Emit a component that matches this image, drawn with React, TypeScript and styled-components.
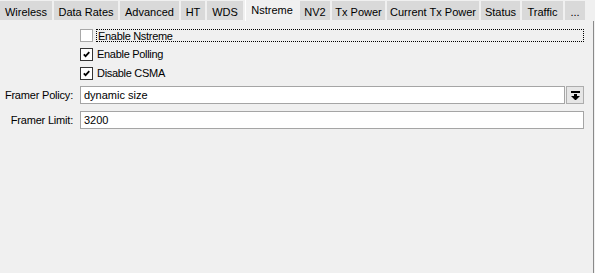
import styled, { createGlobalStyle } from 'styled-components'

const GlobalStyle = createGlobalStyle`
  html, body {
    margin: 0;
    padding: 0;
    background: #f0f0f0;
  }
  body {
    font-family: "Liberation Sans", Arial, sans-serif;
    font-size: 11px;
    color: #000;
  }
`

const tabs = [
  { name: 'Wireless', w: 52 },
  { name: 'Data Rates', w: 64 },
  { name: 'Advanced', w: 59 },
  { name: 'HT', w: 24 },
  { name: 'WDS', w: 36 },
  { name: 'Nstreme', w: 53, active: true },
  { name: 'NV2', w: 30 },
  { name: 'Tx Power', w: 53 },
  { name: 'Current Tx Power', w: 92 },
  { name: 'Status', w: 39 },
  { name: 'Traffic', w: 41 },
  { name: '...', w: 20 },
]

const checks = [
  { label: 'Enable Nstreme', checked: false, focused: true },
  { label: 'Enable Polling', checked: true },
  { label: 'Disable CSMA', checked: true },
]

function CheckMark() {
  return (
    <svg width="11" height="11" viewBox="0 0 11 11">
      <path d="M2.8 5.3 L4.6 7.2 L8.3 3.2" fill="none" stroke="#000" strokeWidth="1.7" />
    </svg>
  )
}

function DropIcon() {
  return (
    <svg width="9" height="9" viewBox="0 0 9 9">
      <rect x="0" y="0" width="9" height="2" fill="#000" />
      <rect x="3" y="3" width="3" height="2" fill="#000" />
      <path d="M0 5 H9 L4.5 9.5 Z" fill="#000" />
    </svg>
  )
}

function App() {
  return (
    <Window>
      <GlobalStyle />
      <TabStrip>
        {tabs.map(t => (
          <Tab key={t.name} $w={t.w} $active={!!t.active}>{t.name}</Tab>
        ))}
      </TabStrip>

      <Panel>
        <CheckList>
          {checks.map(c => (
            <CheckRow key={c.label}>
              <Box $checked={c.checked}>{c.checked && <CheckMark />}</Box>
              <CheckLabel $focused={!!c.focused}>{c.label}</CheckLabel>
            </CheckRow>
          ))}
        </CheckList>

        <Fields>
          <FieldLabel>Framer Policy:</FieldLabel>
          <FieldControl>
            <TextBox>dynamic size</TextBox>
            <DropButton><DropIcon /></DropButton>
          </FieldControl>

          <FieldLabel>Framer Limit:</FieldLabel>
          <FieldControl>
            <TextBox>3200</TextBox>
          </FieldControl>
        </Fields>
      </Panel>
    </Window>
  )
}

export default App

const Window = styled.div`
  width: 595px;
  height: 273px;
  display: flex;
  flex-direction: column;
  overflow: hidden;
  background: #f0f0f0;
`
const TabStrip = styled.div`
  display: flex;
  align-items: flex-start;
  gap: 2px;
  height: 21px;
`
const Tab = styled.div<{ $w: number; $active: boolean }>`
  width: ${p => p.$w}px;
  height: ${p => (p.$active ? 21 : 19)}px;
  margin-top: ${p => (p.$active ? 0 : 1)}px;
  box-sizing: border-box;
  padding: ${p => (p.$active ? '0 0 2px' : '2px 0 0')};
  display: flex;
  align-items: center;
  justify-content: center;
  white-space: nowrap;
  background: ${p => (p.$active ? '#f0f0f0' : '#d9d9d9')};
  border-left: ${p => (p.$active ? '1px solid #ffffff' : 'none')};
`
const Panel = styled.div`
  flex: 1;
  width: 594px;
  box-sizing: border-box;
  border-right: 1px solid #8a8a8a;
  padding: 8px 9px 0 0;
  display: flex;
  flex-direction: column;
  gap: 6px;
`
const CheckList = styled.div`
  display: flex;
  flex-direction: column;
  gap: 6px;
  padding-left: 80px;
`
const CheckRow = styled.div`
  display: flex;
  align-items: center;
  height: 13px;
  gap: 3px;
`
const Box = styled.div<{ $checked: boolean }>`
  width: 13px;
  height: 13px;
  box-sizing: border-box;
  background: #fff;
  border: 1px solid ${p => (p.$checked ? '#333333' : '#a8a8a8')};
  display: flex;
  align-items: center;
  justify-content: center;
  flex-shrink: 0;
`
const CheckLabel = styled.div<{ $focused: boolean }>`
  flex: 1;
  height: 13px;
  line-height: 13px;
  box-sizing: border-box;
  padding-left: 1px;
  letter-spacing: -0.3px;
  border: 1px dotted ${p => (p.$focused ? '#000' : 'transparent')};
  border-width: ${p => (p.$focused ? '1px' : '0')};
`
const Fields = styled.div`
  display: grid;
  grid-template-columns: 73px 1fr;
  column-gap: 7px;
  row-gap: 7px;
  align-items: center;
`
const FieldLabel = styled.div`
  text-align: right;
  white-space: nowrap;
  letter-spacing: -0.2px;
`
const FieldControl = styled.div`
  display: flex;
  gap: 1px;
  height: 18px;
`
const TextBox = styled.div`
  flex: 1;
  box-sizing: border-box;
  height: 18px;
  line-height: 16px;
  padding-left: 3px;
  background: #fff;
  border: 1px solid #a5a5a5;
`
const DropButton = styled.div`
  width: 18px;
  height: 18px;
  box-sizing: border-box;
  background: #e6e6e6;
  border: 1px solid #adadad;
  display: flex;
  align-items: center;
  justify-content: center;
`
